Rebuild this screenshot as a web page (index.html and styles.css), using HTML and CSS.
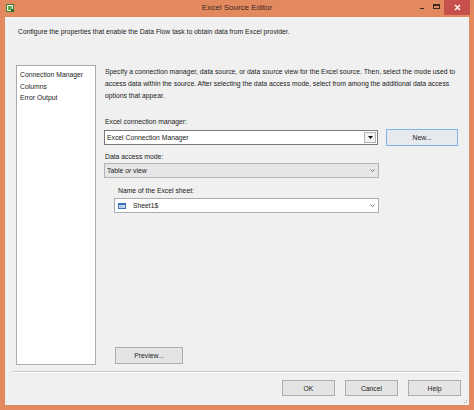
FILE: index.html
```html
<!DOCTYPE html>
<html>
<head>
<meta charset="utf-8">
<link rel="stylesheet" href="styles.css">
</head>
<body>
<div class="window">
  <div class="titlebar">
    <svg class="app-icon" width="8" height="8" viewBox="0 0 8 8">
      <rect x="0.5" y="0.5" width="7" height="7" fill="#e8f2e0" stroke="#3e7d3a"/>
      <rect x="2" y="2" width="4" height="4" fill="#6aa84f"/>
      <rect x="5" y="5" width="3" height="3" fill="#2f6d2a"/>
    </svg>
    <div class="title">Excel Source Editor</div>
    <div class="controls">
      <div class="ctl min"><span></span></div>
      <div class="ctl max"><span></span></div>
      <div class="ctl close">
        <svg width="7" height="7" viewBox="0 0 7 7"><path d="M1 1L6 6M6 1L1 6" stroke="#fff" stroke-width="1.4"/></svg>
      </div>
    </div>
  </div>
  <div class="client">
    <div class="header">Configure the properties that enable the Data Flow task to obtain data from Excel provider.</div>
    <div class="main">
      <div class="nav">
        <div class="nav-item">Connection Manager</div>
        <div class="nav-item">Columns</div>
        <div class="nav-item">Error Output</div>
      </div>
      <div class="panel">
        <div class="intro">Specify a connection manager, data source, or data source view for the Excel source. Then, select the mode used to access data within the source. After selecting the data access mode, select from among the additional data access options that appear.</div>
        <div class="label l1">Excel connection manager:</div>
        <div class="row">
          <div class="combo combo-edit">
            <span class="value">Excel Connection Manager</span>
            <span class="drop-btn"><svg width="5" height="3" viewBox="0 0 5 3"><path d="M0 0H5L2.5 3Z" fill="#111"/></svg></span>
          </div>
          <div class="btn btn-default">New...</div>
        </div>
        <div class="label l2">Data access mode:</div>
        <div class="combo combo-ro">
          <span class="value">Table or view</span>
          <svg class="chev" width="5" height="3" viewBox="0 0 5 3"><path d="M0.5 0.5L2.5 2.5L4.5 0.5" fill="none" stroke="#666" stroke-width="0.9"/></svg>
        </div>
        <div class="sub">
          <div class="label l3">Name of the Excel sheet:</div>
          <div class="combo combo-sheet">
            <svg class="sheet-icon" width="8" height="6" viewBox="0 0 8 6">
              <rect x="0.5" y="0.5" width="7" height="5" fill="#dbe7f7" stroke="#3a6fb5"/>
              <rect x="0.5" y="0.5" width="7" height="1.5" fill="#3a6fb5"/>
              <path d="M3 2V5.5M0.5 3.8H7.5" stroke="#7da2d6" stroke-width="0.6"/>
            </svg>
            <span class="value">Sheet1$</span>
            <svg class="chev" width="5" height="3" viewBox="0 0 5 3"><path d="M0.5 0.5L2.5 2.5L4.5 0.5" fill="none" stroke="#666" stroke-width="0.9"/></svg>
          </div>
        </div>
        <div class="spacer"></div>
        <div class="btn btn-preview">Preview...</div>
      </div>
    </div>
    <div class="separator"></div>
    <div class="footer">
      <div class="btn btn-foot">OK</div>
      <div class="btn btn-foot">Cancel</div>
      <div class="btn btn-foot">Help</div>
    </div>
    <svg class="grip" width="6" height="6" viewBox="0 0 6 6">
      <rect x="4" y="4" width="1" height="1" fill="#aaa"/>
      <rect x="2" y="4" width="1" height="1" fill="#aaa"/>
      <rect x="4" y="2" width="1" height="1" fill="#aaa"/>
    </svg>
  </div>
</div>
</body>
</html>
```

FILE: styles.css
```css
* { box-sizing: border-box; }
html, body { margin: 0; padding: 0; }
body {
  width: 474px;
  height: 410px;
  background: #e3895f;
  font-family: "Liberation Sans", Arial, sans-serif;
  font-size: 6.8px;
  color: #222;
  overflow: hidden;
}
.window {
  width: 474px;
  height: 410px;
  display: flex;
  flex-direction: column;
  padding: 0 5px 5px 5px;
}
.titlebar {
  height: 17px;
  display: flex;
  align-items: center;
  position: relative;
}
.app-icon { margin-left: 1px; margin-top: -2px; }
.title {
  position: absolute;
  left: 0;
  right: 0;
  top: 3px;
  text-align: center;
  font-size: 8px;
  color: #3a2a20;
  font-family: "Liberation Sans", Arial, sans-serif;
}
.controls {
  margin-left: auto;
  display: flex;
  align-self: flex-start;
  height: 15px;
}
.ctl {
  width: 14px;
  height: 15px;
  display: flex;
  align-items: center;
  justify-content: center;
}
.min span { width: 4px; height: 1px; background: #3a2a20; margin-top: 1px; }
.max span { width: 7px; height: 5px; border: 1px solid #3a2a20; border-top-width: 2px; margin-top: -3px; }
.max { margin-right: 1px; }
.close {
  width: 26px;
  background: #c8504c;
  margin-right: -1px;
}
.client {
  flex: 1;
  background: #f0f0f0;
  display: flex;
  flex-direction: column;
  position: relative;
}
.header {
  height: 48px;
  padding: 10px 0 0 13px;
  line-height: 9px;
}
.main {
  display: flex;
  height: 300px;
}
.nav {
  margin-left: 11px;
  width: 80px;
  height: 300px;
  background: #fff;
  border: 1px solid #acacac;
  padding: 3px 0 0 3px;
}
.nav-item { line-height: 11.5px; }
.panel {
  margin-left: 8px;
  width: 358px;
  display: flex;
  flex-direction: column;
}
.intro {
  padding-left: 1px;
  line-height: 12px;
  margin-top: 1px;
}
.label { padding-left: 1px; line-height: 9px; }
.l1 { margin-top: 15px; }
.l2 { margin-top: 6px; }
.l3 { margin-top: 8px; padding-left: 4px; }
.row {
  display: flex;
  align-items: center;
  margin-top: 3px;
}
.combo {
  display: flex;
  align-items: center;
  height: 15px;
  border: 1px solid #abadb3;
  background: #fff;
  padding-left: 2px;
}
.combo .value { flex: 1; }
.combo-edit { width: 274px; border-color: #7a7a7a; }
.drop-btn {
  width: 12px;
  height: 11px;
  border: 1px solid #b5b5b5;
  background: #f2f2f2;
  margin-right: 1px;
  display: flex;
  align-items: center;
  justify-content: center;
}
.btn {
  display: flex;
  align-items: center;
  justify-content: center;
  background: #e4e4e4;
  border: 1px solid #adadad;
}
.btn-default {
  margin-left: 8px;
  width: 72px;
  height: 17px;
  border-color: #7eb4ea;
  background: #e6e9ed;
}
.combo-ro {
  margin-top: 2px;
  width: 275px;
  background: #e6e6e6;
  border-color: #b5b5b5;
}
.chev { margin-right: 3px; }
.sub { padding-left: 10px; }
.combo-sheet {
  margin-top: 3px;
  width: 265px;
  padding-left: 3px;
}
.sheet-icon { margin-right: 7px; }
.spacer { flex: 1; }
.btn-preview {
  margin-left: 11px;
  width: 68px;
  height: 17px;
  margin-bottom: 1px;
}
.separator {
  margin: 6px 8px 0 8px;
  height: 2px;
  border-top: 1px solid #c8c8c8;
  border-bottom: 1px solid #fff;
}
.footer {
  display: flex;
  justify-content: flex-end;
  gap: 10px;
  padding: 7px 8px 0 0;
}
.btn-foot { width: 53px; height: 16px; }
.grip { position: absolute; right: 1px; bottom: 1px; }
```
